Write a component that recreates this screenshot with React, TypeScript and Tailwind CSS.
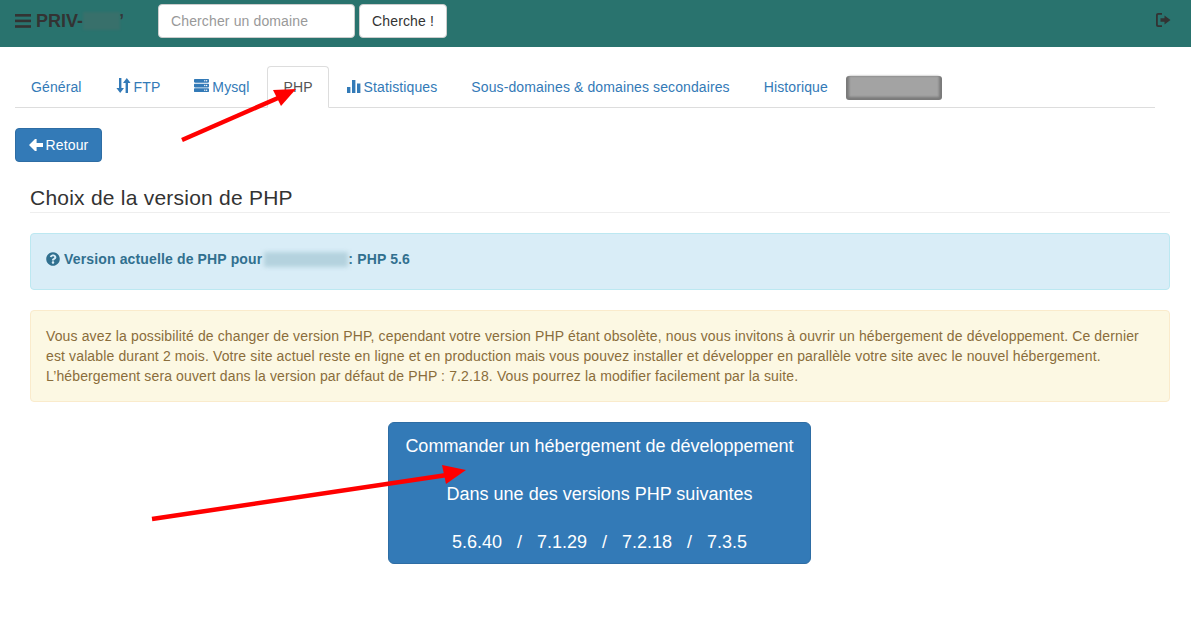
import { FaQuestionCircle, FaServer } from "react-icons/fa";

const font = "font-['Liberation_Sans',Arial,sans-serif]";

function BarsIcon() {
  return (
    <svg width="16" height="14" viewBox="0 0 16 14" className="mr-[5px]" fill="#333333">
      <rect x="0" y="0" width="16" height="2.6" />
      <rect x="0" y="5.6" width="16" height="2.6" />
      <rect x="0" y="11.2" width="16" height="2.6" />
    </svg>
  );
}

function BackIcon() {
  return (
    <svg width="14" height="12" viewBox="0 0 14 12" className="mr-[3px]" fill="#ffffff">
      <path d="M0 6 6 0h1.6v4H14v4H7.6v4H6z" />
    </svg>
  );
}

function SortIcon() {
  return (
    <svg width="15" height="15" viewBox="0 0 15 15" className="inline-block mr-[3px] align-[-1px]" fill="currentColor">
      <path d="M3 0h2.4v10H8l-3.8 5L0.4 10H3z" />
      <path d="M9.6 15h2.4V5h2.6L10.8 0 7 5h2.6z" />
    </svg>
  );
}

function StatsIcon() {
  return (
    <svg width="14" height="13" viewBox="0 0 14 13" className="inline-block mr-[3px] align-[-1px]" fill="currentColor">
      <rect x="0" y="7" width="3.4" height="6" />
      <rect x="5" y="0" width="3.4" height="13" />
      <rect x="10" y="3.5" width="3.4" height="9.5" />
    </svg>
  );
}

function LogoutIcon() {
  return (
    <svg width="15" height="14" viewBox="0 0 15 14" fill="#333333">
      <path d="M2 0h4v1.8H2.6c-.5 0-.8.3-.8.8v8.8c0 .5.3.8.8.8H6V14H2c-1.1 0-2-.9-2-2V2C0 .9.9 0 2 0z" />
      <path d="M4.5 5.2h4V2.4L14.5 7l-6 4.6V8.8h-4z" />
    </svg>
  );
}

function Tab({ children, active }: { children: React.ReactNode; active?: boolean }) {
  if (active) {
    return (
      <li className="mr-[2px] -mb-px">
        <span className="block h-[42px] px-[15px] py-[10px] border border-[#dddddd] border-b-white rounded-t-[4px] bg-white text-[#555555] leading-[20px]">
          {children}
        </span>
      </li>
    );
  }
  return (
    <li className="mr-[2px] -mb-px">
      <span className="block h-[42px] px-[15px] py-[10px] border border-transparent text-[#337ab7] leading-[20px]">
        {children}
      </span>
    </li>
  );
}

export default function App() {
  return (
    <div className={`relative h-[635px] w-[1191px] overflow-hidden bg-white text-[14px] tracking-[0.13px] text-[#333333] ${font}`}>
      <header className="flex h-[47px] items-start bg-[#29736e] pl-[15px] pr-[20px] pt-[4px]">
        <div className="flex h-[34px] w-[143px] items-center text-[18px] font-bold tracking-normal text-[#333333]">
          <BarsIcon />
          <span>PRIV-</span>
          <span className="h-[18px] w-[37px] bg-[#38706b] blur-[1px]" />
          <span className="-ml-[1px] text-[#333333]">’</span>
        </div>
        <input
          readOnly
          placeholder="Chercher un domaine"
          className="h-[34px] w-[197px] rounded-[4px] border border-[#cccccc] bg-white px-[12px] text-[14px] placeholder:text-[#999999] outline-none"
        />
        <button className="ml-[4px] h-[34px] w-[88px] rounded-[4px] border border-[#cccccc] bg-white text-[14px] text-[#333333]">
          Cherche !
        </button>
        <div className="ml-auto flex h-[32px] items-center">
          <LogoutIcon />
        </div>
      </header>

      <div className="w-[1170px] pl-[15px]">
        <ul className="mt-[19px] flex h-[42px] w-[1140px] border-b border-[#dddddd] tracking-[0.11px]">
          <Tab>Général</Tab>
          <Tab>
            <SortIcon />
            FTP
          </Tab>
          <Tab>
            <FaServer className="mr-[3px] inline-block align-[-1px] text-[15px]" />
            Mysql
          </Tab>
          <Tab active>PHP</Tab>
          <Tab>
            <StatsIcon />
            Statistiques
          </Tab>
          <Tab>Sous-domaines &amp; domaines secondaires</Tab>
          <Tab>Historique</Tab>
          <li className="mt-[10px] h-[24px] w-[96px] rounded-[3px] bg-[#7a7a7a] px-[3px] pb-[3px]">
            <div className="h-[21px] w-full bg-[#a3a3a3] blur-[1px]" />
          </li>
        </ul>

        <button className="mt-[20px] flex h-[34px] w-[87px] items-center justify-center rounded-[4px] border border-[#2e6da4] bg-[#337ab7] text-[14px] text-white">
          <BackIcon />
          Retour
        </button>

        <div className="pl-[15px]">
          <h2 className="mt-[22px] h-[29px] border-b border-[#eeeeee] text-[21px] leading-[28px] tracking-[0.23px] text-[#333333]">
            Choix de la version de PHP
          </h2>

          <div className="mt-[20px] flex h-[57px] items-start rounded-[4px] border border-[#bce8f1] bg-[#d9edf7] px-[15px] pt-[15px] font-bold leading-[20px] tracking-[0.145px] text-[#31708f]">
            <FaQuestionCircle className="mr-[4px] mt-[3px] text-[14px]" />
            <span>Version actuelle de PHP pour</span>
            <span className="ml-[2px] mt-[3px] h-[15px] w-[84px] bg-[#b4d2de] blur-[2px]" />
            <span>: PHP 5.6</span>
          </div>

          <div className="mt-[20px] h-[92px] rounded-[4px] border border-[#faebcc] bg-[#fcf8e3] px-[15px] pt-[15px] leading-[20px] text-[#8a6d3b]">
            Vous avez la possibilité de changer de version PHP, cependant votre version PHP étant obsolète, nous vous invitons à ouvrir un hébergement de développement. Ce dernier est valable durant 2 mois. Votre site actuel reste en ligne et en production mais vous pouvez installer et développer en parallèle votre site avec le nouvel hébergement.
            <br />
            L’hébergement sera ouvert dans la version par défaut de PHP : 7.2.18. Vous pourrez la modifier facilement par la suite.
          </div>

          <div className="mt-[20px] flex justify-center pr-[1px]">
            <button className="h-[142px] w-[423px] rounded-[6px] border border-[#2e6da4] bg-[#337ab7] pt-[2px] text-center text-[18px] leading-[24px] tracking-normal text-white">
              Commander un hébergement de développement
              <br />
              <br />
              Dans une des versions PHP suivantes
              <br />
              <br />
              <span className="whitespace-pre">5.6.40   /   7.1.29   /   7.2.18   /   7.3.5</span>
            </button>
          </div>
        </div>
      </div>

      {/* annotation arrows drawn over the page */}
      <svg className="absolute left-0 top-0 pointer-events-none" width="1191" height="635" fill="#ff0000">
        <line x1="182" y1="140" x2="278" y2="98" stroke="#ff0000" strokeWidth="4.5" />
        <polygon points="296,89 281,106 273,90" />
        <line x1="152" y1="519" x2="447" y2="475" stroke="#ff0000" strokeWidth="4.5" />
        <polygon points="466,470 446,484 442,465" />
      </svg>
    </div>
  );
}
